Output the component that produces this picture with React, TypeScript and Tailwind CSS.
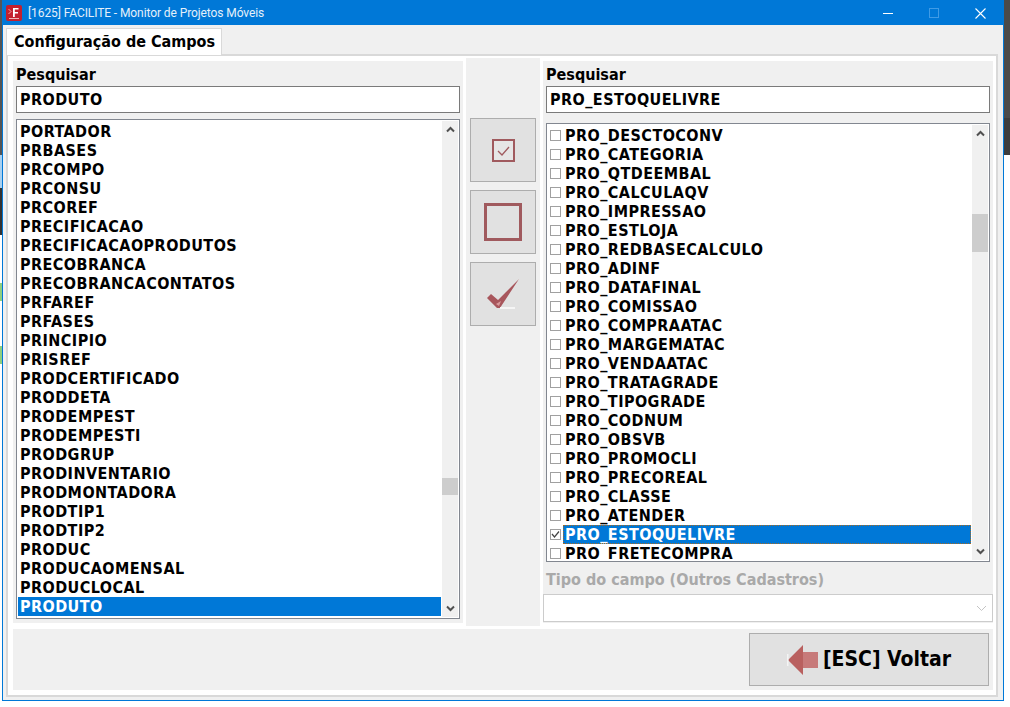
import React from 'react';

const FONT = "font-['DejaVu_Sans_Condensed','DejaVu_Sans',sans-serif]";

const LEFT_ITEMS = [
  'PORTADOR', 'PRBASES', 'PRCOMPO', 'PRCONSU', 'PRCOREF', 'PRECIFICACAO', 'PRECIFICACAOPRODUTOS',
  'PRECOBRANCA', 'PRECOBRANCACONTATOS', 'PRFAREF', 'PRFASES', 'PRINCIPIO', 'PRISREF', 'PRODCERTIFICADO',
  'PRODDETA', 'PRODEMPEST', 'PRODEMPESTI', 'PRODGRUP', 'PRODINVENTARIO', 'PRODMONTADORA', 'PRODTIP1',
  'PRODTIP2', 'PRODUC', 'PRODUCAOMENSAL', 'PRODUCLOCAL', 'PRODUTO',
];

const RIGHT_ITEMS = [
  'PRO_DESCTOCONV', 'PRO_CATEGORIA', 'PRO_QTDEEMBAL', 'PRO_CALCULAQV', 'PRO_IMPRESSAO', 'PRO_ESTLOJA',
  'PRO_REDBASECALCULO', 'PRO_ADINF', 'PRO_DATAFINAL', 'PRO_COMISSAO', 'PRO_COMPRAATAC', 'PRO_MARGEMATAC',
  'PRO_VENDAATAC', 'PRO_TRATAGRADE', 'PRO_TIPOGRADE', 'PRO_CODNUM', 'PRO_OBSVB', 'PRO_PROMOCLI',
  'PRO_PRECOREAL', 'PRO_CLASSE', 'PRO_ATENDER', 'PRO_ESTOQUELIVRE', 'PRO_FRETECOMPRA',
];

const Chevron = ({ up, color = '#505050' }: { up?: boolean; color?: string }) => (
  <svg width="9" height="7" viewBox="0 0 9 7" className="block">
    <path d={up ? 'M1 5.5 L4.5 2 L8 5.5' : 'M1 1.5 L4.5 5 L8 1.5'} fill="none" stroke={color} strokeWidth="2" />
  </svg>
);

const Scrollbar = ({ thumbTop, thumbHeight }: { thumbTop: string; thumbHeight: string }) => (
  <div className="w-[16px] h-full bg-[#f0f0f0] flex flex-col items-center shrink-0">
    <div className="h-[17px] flex items-center justify-center shrink-0"><Chevron up /></div>
    <div className="flex-1 w-full">
      <div className={`${thumbTop} ${thumbHeight} w-full bg-[#cdcdcd]`} />
    </div>
    <div className="h-[17px] flex items-center justify-center shrink-0"><Chevron /></div>
  </div>
);

const SearchBox = ({ value }: { value: string }) => (
  <div className="h-[27px] mx-[3px] border border-[#7a7a7a] bg-white flex items-center pl-[3px] text-[16px] tracking-[0.45px] text-black">
    {value}
  </div>
);

const ToolButton = ({ children }: { children: React.ReactNode }) => (
  <div className="w-[66px] h-[64px] bg-[#e1e1e1] border border-[#adadad] flex items-center justify-center">
    {children}
  </div>
);

export default function App() {
  return (
    <div className={`${FONT} w-[1010px] h-[707px] overflow-hidden bg-white flex font-bold`}>
      {/* what shows of the desktop behind the window */}
      <div className="w-[2px] h-full flex flex-col shrink-0">
        <div className="h-[155px] bg-[#555555]" />
        <div className="h-[33px] bg-[#a8d0f0]" />
        <div className="h-[47px] bg-[#333333]" />
        <div className="h-[48px]" />
        <div className="h-[18px] bg-[#8fcf7f]" />
        <div className="h-[45px]" />
        <div className="h-[18px] bg-[#8fcf7f]" />
      </div>

      <div className="w-[1002px] h-[701px] border border-[#0078d7] bg-[#f0f0f0] flex flex-col shrink-0">
        {/* title bar */}
        <div className="h-[24px] bg-[#0078d7] flex items-center shrink-0">
          <svg width="16" height="16" viewBox="0 0 16 16" className="ml-[3px] mr-[6px] shrink-0">
            <rect width="16" height="16" rx="2" fill="#c3202e" />
            <path d="M7 3h5.5v1.6H8.8v2.3h3.2v1.6H8.8V12H7z" fill="#fff" />
            <path d="M2.5 4 L5 6.5 L2.5 9" fill="none" stroke="#f3b0b0" strokeWidth="0.9" />
            <rect x="3" y="13" width="10" height="1" fill="#eeb5b5" />
          </svg>
          <span className="font-['Roboto',sans-serif] font-normal text-[12px] tracking-[-0.09px] text-[#e4f0fa]">
            [1625] FACILITE - Monitor de Projetos Móveis
          </span>
          <div className="ml-auto flex items-center">
            <div className="w-[46px] flex justify-center">
              <div className="w-[10px] h-px bg-white" />
            </div>
            <div className="w-[46px] flex justify-center">
              <div className="w-[10px] h-[10px] border border-[#3f9be6]" />
            </div>
            <div className="w-[46px] flex justify-center">
              <svg width="11" height="11" viewBox="0 0 11 11">
                <path d="M0.5 0.5 L10.5 10.5 M10.5 0.5 L0.5 10.5" stroke="#fff" strokeWidth="1.1" />
              </svg>
            </div>
          </div>
        </div>

        {/* tabs */}
        <div className="flex-1 flex flex-col pl-[3px] pr-[5px] pt-[3px] pb-[3px] min-h-0">
          <div className="h-[26px] flex shrink-0">
            <div className="w-[216px] h-[27px] bg-white border border-b-0 border-[#d9d9d9] z-10 pl-[7px] text-[16px] text-black leading-[25px]">
              Configuração de Campos
            </div>
          </div>
          <div className="flex-1 bg-white border-2 border-[#d9d9d9] pl-[5px] pr-[3px] pt-[2px] flex flex-col min-h-0">
            <div className="h-[568px] flex shrink-0">
              {/* left column */}
              <div className="w-[450px] h-[562px] mt-[3px] bg-[#f0f0f0] flex flex-col shrink-0">
                <div className="h-[25px] pl-[3px] text-[16px] text-black leading-[28px]">Pesquisar</div>
                <SearchBox value="PRODUTO" />
                <div className="h-[500px] mt-[6px] mx-[3px] border border-[#828790] p-px bg-white flex">
                  <div className="w-[424px] pt-px overflow-hidden shrink-0">
                    {LEFT_ITEMS.map((item) => (
                      <div
                        key={item}
                        className={`h-[19px] mr-px pl-[2px] text-[16px] tracking-[0.45px] leading-[19px] ${item === 'PRODUTO' ? 'bg-[#0078d7] text-white' : 'text-black'}`}
                      >
                        {item}
                      </div>
                    ))}
                  </div>
                  <Scrollbar thumbTop="mt-[340px]" thumbHeight="h-[17px]" />
                </div>
              </div>

              {/* middle column */}
              <div className="w-[74px] h-[568px] ml-[3px] bg-[#f0f0f0] flex flex-col items-center gap-[8px] pt-[60px] shrink-0">
                <ToolButton>
                  <svg width="23" height="23" viewBox="0 0 23 23">
                    <rect x="1" y="1" width="21" height="21" fill="#e6e6e6" stroke="#a05a5e" strokeWidth="2" />
                    <path d="M6 12 L10 16 L17 8" fill="none" stroke="#a05a5e" strokeWidth="1.3" />
                  </svg>
                </ToolButton>
                <ToolButton>
                  <svg width="38" height="38" viewBox="0 0 38 38">
                    <rect x="1.5" y="1.5" width="35" height="35" fill="none" stroke="#a05a5e" strokeWidth="3" />
                  </svg>
                </ToolButton>
                <ToolButton>
                  <svg width="33" height="31" viewBox="0 0 33 31">
                    <path d="M0 19 L4 15 L11 21 L32 0 L13 29 L10 29 Z" fill="#a8565c" />
                    <path d="M9 25 L14 22 L12 27 Z" fill="#d99a9c" />
                    <rect x="13" y="28" width="15" height="2" fill="#f5f5f5" />
                  </svg>
                </ToolButton>
              </div>

              {/* right column */}
              <div className="w-[450px] h-[562px] mt-[3px] ml-[3px] bg-[#f0f0f0] flex flex-col shrink-0">
                <div className="h-[25px] pl-[3px] text-[16px] text-black leading-[28px]">Pesquisar</div>
                <SearchBox value="PRO_ESTOQUELIVRE" />
                <div className="h-[439px] mt-[10px] mx-[3px] border border-[#828790] p-px bg-white flex">
                  <div className="w-[424px] pt-px overflow-hidden shrink-0">
                    {RIGHT_ITEMS.map((item) => {
                      const selected = item === 'PRO_ESTOQUELIVRE';
                      return (
                        <div key={item} className="h-[19px] flex items-center">
                          <div className="w-[11px] h-[11px] ml-[2px] mr-[2px] border border-[#a0a0a0] bg-white shrink-0 flex items-center justify-center">
                            {selected && (
                              <svg width="9" height="9" viewBox="0 0 9 9">
                                <path d="M1 4 L3.5 7 L8 1.5" fill="none" stroke="#444" strokeWidth="1.2" />
                              </svg>
                            )}
                          </div>
                          <div
                            className={`flex-1 h-[19px] mr-px pl-[2px] text-[16px] tracking-[0.45px] leading-[19px] ${selected ? 'bg-[#0078d7] text-white outline-1 -outline-offset-1 outline-dotted outline-[#a86a20]' : 'text-black'}`}
                          >
                            {item}
                          </div>
                        </div>
                      );
                    })}
                  </div>
                  <Scrollbar thumbTop="mt-[72px]" thumbHeight="h-[38px]" />
                </div>
                <div className="h-[24px] mt-[6px] pl-[3px] text-[16px] text-[#a9a9a9] leading-[24px]">
                  Tipo do campo (Outros Cadastros)
                </div>
                <div className="h-[28px] mt-[2px] border border-[#cccccc] bg-white flex items-center justify-end pr-[5px]">
                  <svg width="11" height="7" viewBox="0 0 11 7">
                    <path d="M1 1 L5.5 5.5 L10 1" fill="none" stroke="#c4c4c4" strokeWidth="1" />
                  </svg>
                </div>
              </div>
            </div>

            {/* footer */}
            <div className="h-[61px] mt-[3px] bg-[#f0f0f0] flex justify-end items-start pt-[4px] pr-[4px] shrink-0">
              <div className="w-[240px] h-[53px] bg-[#e1e1e1] border border-[#adadad] flex items-center justify-center gap-[5px] text-[21px] text-black">
                <svg width="31" height="32" viewBox="0 0 31 32" className="shrink-0">
                  <path d="M1 16 L16 1 V8 H31 V24 H16 V31 Z" fill="#b9605f" />
                  <rect x="16" y="8" width="15" height="16" fill="#c77a7a" />
                  <rect x="0" y="10" width="1.5" height="12" fill="#f4f4f4" />
                </svg>
                <span>[ESC] Voltar</span>
              </div>
            </div>
          </div>
        </div>
      </div>

      <div className="flex-1 h-full flex flex-col">
        <div className="h-[118px] bg-[#4a4a4a]" />
        <div className="h-[37px] bg-[#3c3c3c]" />
      </div>
    </div>
  );
}
